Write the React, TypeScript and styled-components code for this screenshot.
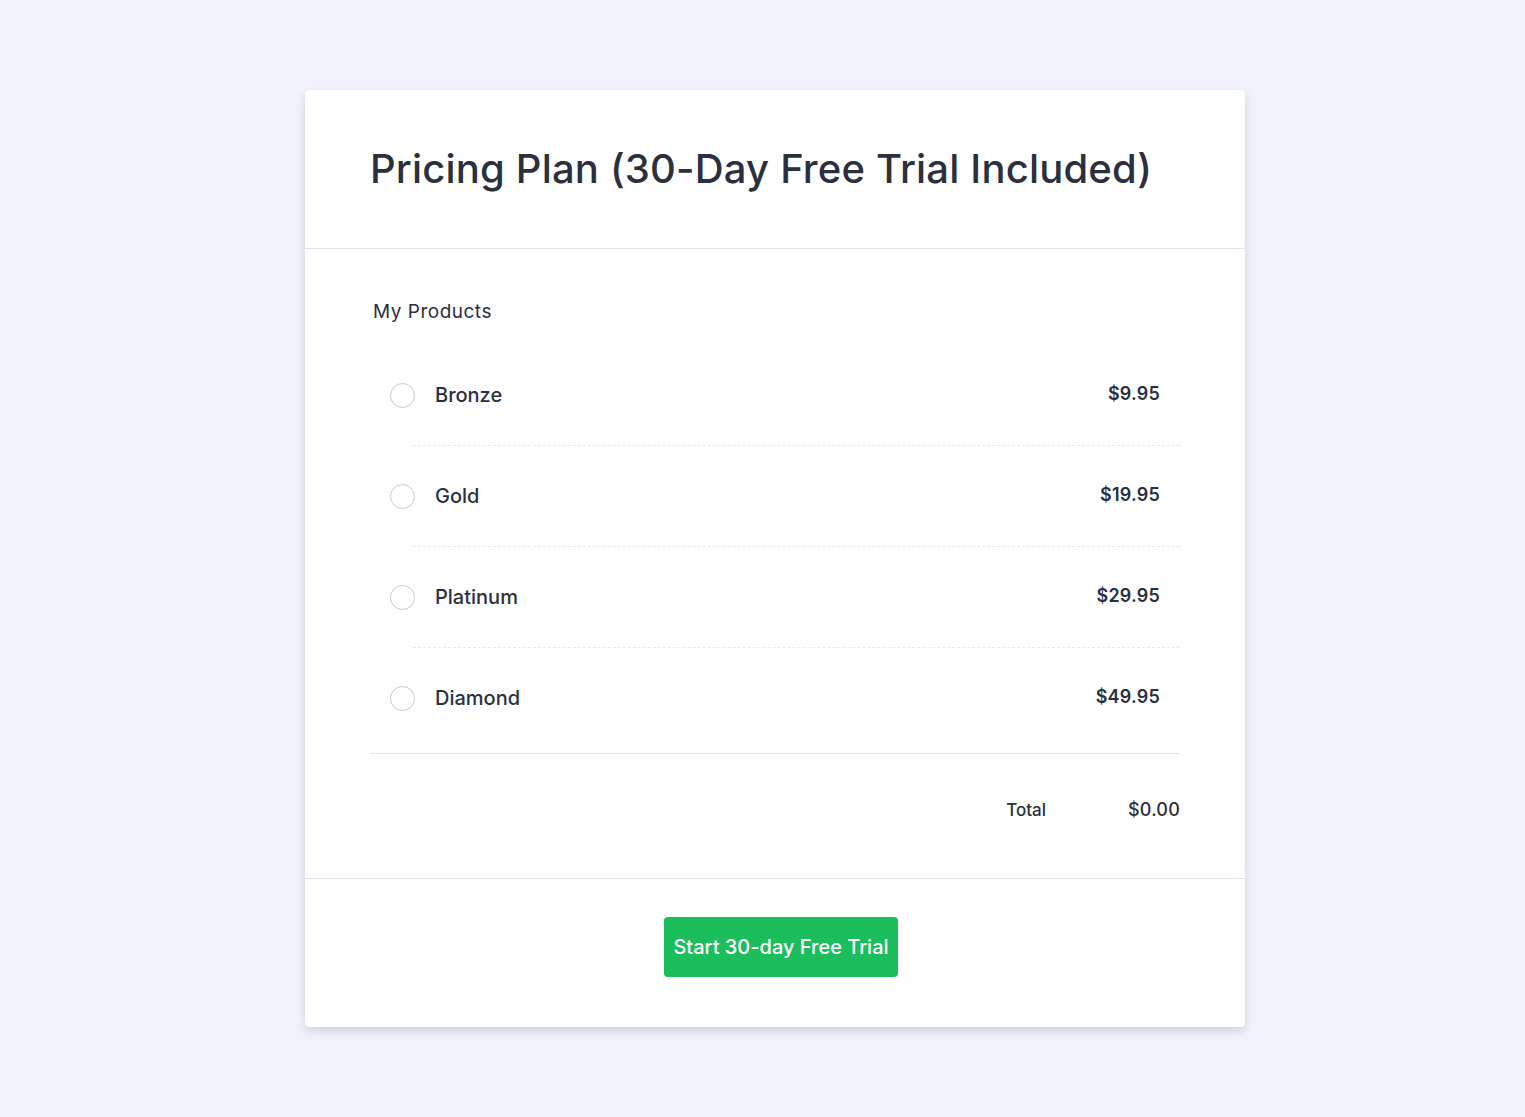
import React, { useState } from "react";
import styled, { createGlobalStyle } from "styled-components";

const GlobalStyle = createGlobalStyle`
  body {
    margin: 0;
    background: #f1f2fb;
    font-family: Inter, "Noto Sans", sans-serif;
    color: #2b2f3e;
  }
`;

const S = {
  Page: styled.div`
    display: flex;
    justify-content: center;
    padding: 90px 0 90px 25px;
  `,
  Card: styled.div`
    width: 940px;
    background: #ffffff;
    border-radius: 4px;
    box-shadow: 0 4px 8px rgba(120, 124, 160, 0.28);
  `,
  Header: styled.div`
    padding: 55px 65px;
    border-bottom: 1px solid #e2e2ea;
  `,
  Title: styled.h1`
    margin: 0;
    font-size: 40px;
    line-height: 48px;
    font-weight: 500;
    letter-spacing: 0.18px;
    color: #2b2f3e;
  `,
  Body: styled.div`
    padding: 51px 65px 58px 65px;
    border-bottom: 1px solid #e2e2ea;
  `,
  SectionLabel: styled.div`
    padding-left: 3px;
    font-size: 19px;
    line-height: 24px;
    font-weight: 400;
    letter-spacing: 0.5px;
    margin-bottom: 21px;
  `,
  List: styled.div`
    display: flex;
    flex-direction: column;
    padding-bottom: 5px;
    border-bottom: 1px solid #e2e2ea;
  `,
  Row: styled.label`
    display: flex;
    align-items: center;
    height: 100px;
    padding: 0 20px;
    cursor: pointer;
  `,
  Divider: styled.div`
    margin-left: 43px;
    border-top: 1px dashed #e9e9f0;
  `,
  Radio: styled.span<{ $checked?: boolean }>`
    width: 25px;
    height: 25px;
    box-sizing: border-box;
    border-radius: 50%;
    border: 1px solid ${(p) => (p.$checked ? "#1bbd5c" : "#c6c9db")};
    background: ${(p) => (p.$checked ? "#1bbd5c" : "#fff")};
    flex-shrink: 0;
  `,
  Name: styled.span`
    margin-left: 20px;
    font-size: 20px;
    font-weight: 500;
    flex: 1;
  `,
  Price: styled.span`
    font-size: 18px;
    font-weight: 600;
    letter-spacing: 0.2px;
    margin-top: -4px;
  `,
  TotalRow: styled.div`
    display: flex;
    justify-content: flex-end;
    align-items: center;
    padding-top: 44px;
  `,
  TotalLabel: styled.span`
    font-size: 17px;
    font-weight: 500;
    margin-right: 82px;
    margin-top: 2px;
  `,
  TotalValue: styled.span`
    font-weight: 500;
    font-size: 18px;
    letter-spacing: 0.2px;
  `,
  Footer: styled.div`
    display: flex;
    justify-content: center;
    padding: 38px 0 50px;
  `,
  Button: styled.button`
    height: 60px;
    margin-left: 12px;
    padding: 0 9px;
    border: none;
    border-radius: 4px;
    background: #1bbd5c;
    color: #ffffff;
    font-family: Inter, "Noto Sans", sans-serif;
    font-size: 20px;
    font-weight: 500;
    cursor: pointer;
  `,
};

const plans = [
  { name: "Bronze", price: 9.95 },
  { name: "Gold", price: 19.95 },
  { name: "Platinum", price: 29.95 },
  { name: "Diamond", price: 49.95 },
];

const App = () => {
  const [selected, setSelected] = useState<number | null>(null);
  const total = selected === null ? 0 : plans[selected].price;

  return (
    <>
      <GlobalStyle />
      <S.Page>
        <S.Card>
          <S.Header>
            <S.Title>Pricing Plan (30-Day Free Trial Included)</S.Title>
          </S.Header>
          <S.Body>
            <S.SectionLabel>My Products</S.SectionLabel>
            <S.List>
              {plans.map((plan, i) => (
                <React.Fragment key={plan.name}>
                  {i > 0 && <S.Divider />}
                  <S.Row onClick={() => setSelected(i)}>
                    <S.Radio $checked={selected === i} />
                    <S.Name>{plan.name}</S.Name>
                    <S.Price>${plan.price.toFixed(2)}</S.Price>
                  </S.Row>
                </React.Fragment>
              ))}
            </S.List>
            <S.TotalRow>
              <S.TotalLabel>Total</S.TotalLabel>
              <S.TotalValue>${total.toFixed(2)}</S.TotalValue>
            </S.TotalRow>
          </S.Body>
          <S.Footer>
            <S.Button>Start 30-day Free Trial</S.Button>
          </S.Footer>
        </S.Card>
      </S.Page>
    </>
  );
};

export default App;
